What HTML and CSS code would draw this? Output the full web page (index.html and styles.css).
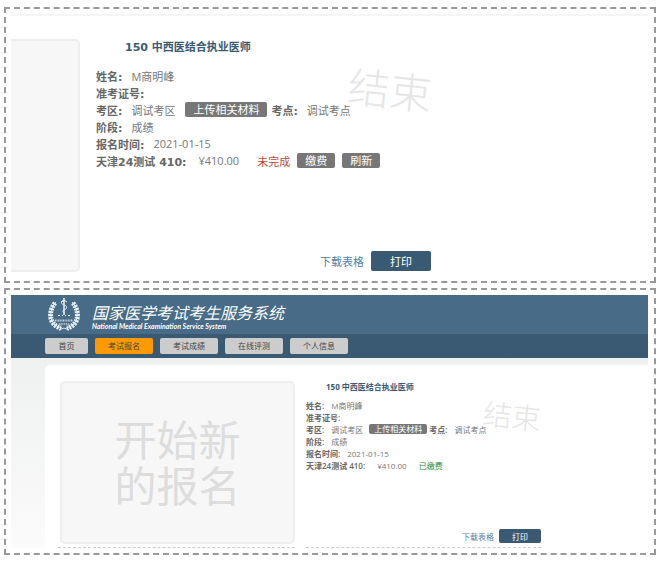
FILE: index.html
```
<!DOCTYPE html>
<html lang="zh-CN">
<head>
  <meta charset="UTF-8" />
  <meta name="viewport" content="width=device-width, initial-scale=1.0"/>
  <title>国家医学考试考生服务系统</title>
  <link rel="stylesheet" href="styles.css">
</head>
<body>
  <section class="frame">
    <div class="record large">
      <div class="box"></div>
      <div class="form">
        <h2>150 中西医结合执业医师</h2>
        <div class="stamp">结束</div>
        <dl>
          <div class="row"><dt>姓名:</dt><dd>M商明峰</dd></div>
          <div class="row"><dt>准考证号:</dt></div>
          <div class="row">
            <dt>考区:</dt><dd>调试考区</dd>
            <dd class="upload"><button class="tag" type="button">上传相关材料</button></dd>
            <dt>考点:</dt><dd>调试考点</dd>
          </div>
          <div class="row"><dt>阶段:</dt><dd>成绩</dd></div>
          <div class="row"><dt>报名时间:</dt><dd>2021-01-15</dd></div>
          <div class="row">
            <dt>天津24测试 410:</dt><dd class="price">¥410.00</dd>
            <dd class="state unpaid">未完成</dd>
            <dd class="pay"><button class="tag" type="button">缴费</button><button class="tag" type="button">刷新</button></dd>
          </div>
        </dl>
        <div class="actions">
          <a href="#">下载表格</a>
          <button class="print" type="button">打印</button>
        </div>
      </div>
    </div>
  </section>

  <section class="frame">
    <header>
      <svg class="logo" viewBox="0 0 32 34" fill="none" stroke="#e8f0f5">
        <path d="M8 5C2 11 1 21 6 27Q9 30 14 31M24 5C30 11 31 21 26 27Q23 30 18 31" stroke-width="1"/>
        <path d="M7 6C2 12 1 21 5 26Q8 30 13 31M25 6C30 12 31 21 27 26Q24 30 19 31" stroke-width="5" stroke-dasharray="2 1"/>
        <path d="M16 1V18" stroke-width="1.5"/>
        <path d="M16 4C12 4 13 7 16 8C20 9 19 12 16 13C14 14 15 16 17 16M13 5L16 3L19 5" stroke-width="1"/>
        <path d="M10 18.5H12M14 18.5H15M17 18.5H18M20 18.5H22" stroke-width="1"/>
        <path d="M7 23.5H25" stroke-width="2" stroke-dasharray="1 .6" opacity=".8"/>
        <path d="M11 27H21" stroke-width="1.5" stroke-dasharray="1.5 .8" opacity=".8"/>
        <path d="M11 33L16 31L21 33" stroke-width="1"/>
      </svg>
      <div class="brand">
        <h1>国家医学考试考生服务系统</h1>
        <p>National Medical Examination Service System</p>
      </div>
    </header>
    <nav>
      <a class="home" href="#">首页</a>
      <a class="active" href="#">考试报名</a>
      <a href="#">考试成绩</a>
      <a href="#">在线评测</a>
      <a href="#">个人信息</a>
    </nav>
    <main>
      <div class="record small">
        <div class="cell">
          <a class="box" href="#">开始新<br>的报名</a>
        </div>
        <div class="form cell">
          <h2>150 中西医结合执业医师</h2>
          <div class="stamp">结束</div>
          <dl>
            <div class="row"><dt>姓名:</dt><dd>M商明峰</dd></div>
            <div class="row"><dt>准考证号:</dt></div>
            <div class="row">
              <dt>考区:</dt><dd>调试考区</dd>
              <dd class="upload"><button class="tag" type="button">上传相关材料</button></dd>
              <dt>考点:</dt><dd>调试考点</dd>
            </div>
            <div class="row"><dt>阶段:</dt><dd>成绩</dd></div>
            <div class="row"><dt>报名时间:</dt><dd>2021-01-15</dd></div>
            <div class="row">
              <dt>天津24测试 410:</dt><dd class="price">¥410.00</dd>
              <dd class="state paid">已缴费</dd>
            </div>
          </dl>
          <div class="actions">
            <a href="#">下载表格</a>
            <button class="print" type="button">打印</button>
          </div>
        </div>
      </div>
    </main>
  </section>
</body>
</html>
```

FILE: styles.css
```
* {
  margin: 0;
  padding: 0;
  box-sizing: border-box;
}

body {
  padding: 7px 5px 7px 4px;
  background-color: #fff;
  color: #666;
  font-family: 'Open Sans', 'Noto Sans CJK SC', sans-serif;
}

a {
  text-decoration: none;
}

button {
  border: none;
  font: inherit;
  cursor: pointer;
}

.frame {
  border: 2px dashed #999;
  padding: 5px 6px 5px 5px;
}

.frame + .frame {
  margin-top: 5px;
}

/* Registration record */
.record {
  display: flex;
}

.box {
  display: flex;
  align-items: center;
  justify-content: center;
  border: 2px solid #eee;
  border-radius: 5px;
  background-color: #f7f7f7;
}

.form {
  position: relative;
  display: flex;
  flex-direction: column;
}

h2 {
  color: #3a5a74;
  font-weight: bold;
}

.row {
  display: flex;
  align-items: center;
  white-space: nowrap;
}

dt {
  color: #666;
  font-weight: 600;
}

dd {
  color: #777;
}

.tag {
  display: block;
  border-radius: 2px;
  background-color: #777;
  color: #fff;
}

.row .unpaid {
  color: #b5493a;
}

.row .paid {
  color: #2f8a35;
}

.pay {
  display: flex;
  gap: 7px;
}

.stamp {
  position: absolute;
  color: #e6e6e6;
  font-weight: 300;
  line-height: 1;
  white-space: nowrap;
  transform: rotate(6deg);
}

.actions {
  display: flex;
  align-items: center;
  justify-content: flex-end;
  margin-top: auto;
  margin-bottom: 1px;
}

.actions a {
  color: #55809f;
}

.print {
  border-radius: 2px;
  background-color: #3a5a74;
  color: #fff;
}

/* Large record */
.large {
  gap: 16px;
  border-top: 2px solid #f5f5f5;
  padding: 23px 0 4px;
  font-size: 11px;
}

.large .box {
  width: 69px;
  min-height: 233px;
  border-left: none;
  border-radius: 0 5px 5px 0;
}

.large .form {
  width: 335px;
}

.large h2,
.large dt {
  font-family: 'DejaVu Sans', 'Noto Sans CJK SC', sans-serif;
}

.large h2 {
  padding-left: 29px;
  font-size: 11px;
  line-height: 18px;
}

.large dl {
  margin-top: 10px;
}

.large .row {
  height: 17px;
}

.large dt + dd {
  margin-left: 9px;
}

.large .tag {
  height: 15px;
  padding: 0 8px;
  line-height: 15px;
}

.large .upload {
  margin: 0 4px 0 10px;
}

.large .row .price {
  margin-left: 12px;
}

.large .state {
  margin: 0 7px 0 18px;
}

.large .stamp {
  top: 30px;
  left: 252px;
  font-size: 42px;
}

.large .actions {
  gap: 7px;
}

.large .print {
  width: 60px;
  height: 20px;
}

/* Site header */
header {
  display: flex;
  align-items: flex-start;
  gap: 12px;
  height: 39px;
  padding: 2px 0 0 37px;
  background-color: #486b87;
  color: #fff;
}

.logo {
  width: 32px;
  height: 34px;
}

h1 {
  font-size: 16px;
  font-style: italic;
  font-weight: 400;
  line-height: 18px;
}

.brand {
  padding-top: 7px;
}

.brand p {
  font-family: Lato, sans-serif;
  font-size: 7px;
  font-style: italic;
  font-weight: bold;
  line-height: 8px;
}

nav {
  display: flex;
  gap: 7px;
  padding: 4px 34px;
  background-color: #3a5a74;
}

nav a {
  width: 58px;
  border-radius: 2px;
  background-color: #ccc;
  color: #444;
  font-size: 8px;
  line-height: 16px;
  text-align: center;
}

nav .home {
  width: 43px;
}

nav .active {
  background-color: #f90;
}

main {
  padding: 7px 0 0 34px;
  background: linear-gradient(#eff0f0, #fbfbfb);
}

/* Small record */
.small {
  gap: 11px;
  border-radius: 5px 0 0;
  padding: 16px 0 0 13px;
  background-color: #fff;
  font-size: 8px;
}

.small .cell {
  border-bottom: 1px dashed #ccc;
  padding-bottom: 3px;
}

.small .box {
  min-height: 163px;
  width: 235px;
  margin-left: 2px;
  color: #ddd;
  font-size: 42px;
  line-height: 46px;
}

.small .form {
  width: 235px;
}

.small h2 {
  padding-left: 20px;
  font-size: 8px;
  line-height: 12px;
}

.small dl {
  margin-top: 6px;
}

.small .row {
  height: 12px;
}

.small dt + dd {
  margin-left: 7px;
}

.small .tag {
  height: 10px;
  padding: 0 5px;
  line-height: 10px;
}

.small .upload {
  margin: 0 2px 0 6px;
}

.small .row .price {
  margin-left: 12px;
}

.small .state {
  margin-left: 12px;
}

.small .stamp {
  top: 20px;
  left: 177px;
  font-size: 29px;
}

.small .actions {
  gap: 5px;
}

.small .print {
  width: 42px;
  height: 14px;
}
```
